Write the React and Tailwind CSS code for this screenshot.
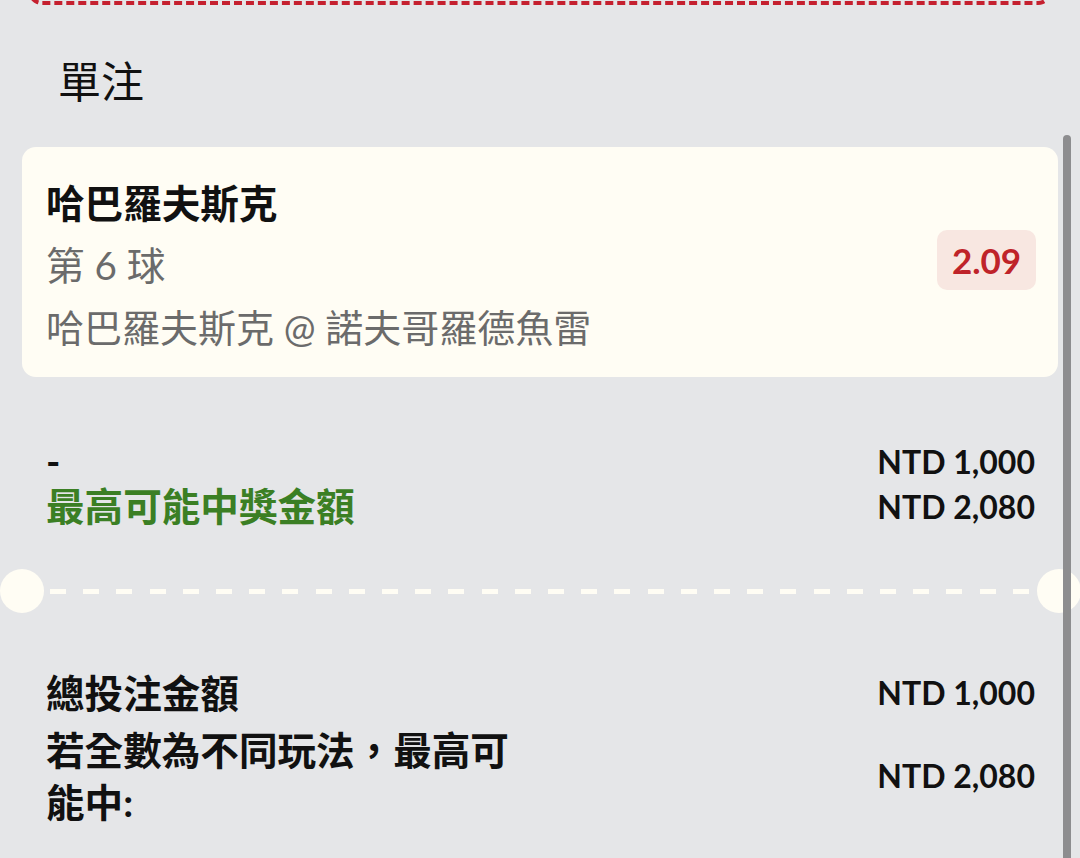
import React from 'react';

const FONT = "font-['Lato','Noto_Sans_CJK_TC',sans-serif]";

function AmountRow({ label, amount, labelClass = '', leading = 'leading-[45px]' }) {
  return (
    <div className="flex items-center justify-between">
      <div className={`w-[485px] text-[38.6px] font-bold ${leading} ${labelClass}`}>{label}</div>
      <div className={`text-[32px] font-bold text-[#111] ${leading}`}>{amount}</div>
    </div>
  );
}

export default function App() {
  return (
    <div className={`relative w-[1080px] min-h-[858px] overflow-hidden bg-[#e5e6e8] text-[#111] ${FONT}`}>
      {/* previous ticket (cut off at top) */}
      <div className="mx-[28px] -mt-[38px] h-[43px] rounded-[14px] border-[4px] border-dashed border-[#c5202f]" />

      <h1 className="ml-[58px] mt-[48px] mb-[36px] text-[43px] font-normal leading-[58px]">單注</h1>

      {/* bet card */}
      <div className="mx-[22px] flex items-center justify-between rounded-[14px] bg-[#fffdf4] pl-[24px] pr-[22px] pt-[25px] pb-[19px]">
        <div className="text-[38.6px] leading-[62px]">
          <div className="font-bold text-[#111]">哈巴羅夫斯克</div>
          <div className="text-[#6b6b6b]">第 6 球</div>
          <div className="text-[38px] text-[#6b6b6b]">哈巴羅夫斯克 @ 諾夫哥羅德魚雷</div>
        </div>
        <div className="-mt-[10px] flex h-[60px] w-[99px] items-center justify-center rounded-[10px] bg-[#f8e7e1] text-[35px] font-bold text-[#bf2329]">
          2.09
        </div>
      </div>

      <div className="pl-[46px] pr-[45px] pt-[62px] pb-[40px]">
        <AmountRow label="-" amount="NTD 1,000" />
        <AmountRow label="最高可能中獎金額" amount="NTD 2,080" labelClass="text-[#3b7f24]" />
      </div>

      {/* perforation */}
      <div className="flex h-[44px] items-center">
        <div className="h-[44px] w-[44px] shrink-0 rounded-full bg-[#fffdf4]" />
        <div className="ml-[6px] mr-[6px] h-[5px] flex-1 bg-[repeating-linear-gradient(90deg,#fffdf4_0_16px,transparent_16px_33.2px)]" />
        <div className="-mr-[1px] h-[44px] w-[44px] shrink-0 rounded-full bg-[#fffdf4]" />
      </div>

      <div className="flex flex-col gap-[5px] pl-[46px] pr-[45px] pt-[54px]">
        <AmountRow label="總投注金額" amount="NTD 1,000" leading="leading-[52px]" />
        <AmountRow label="若全數為不同玩法，最高可能中:" amount="NTD 2,080" leading="leading-[52px]" />
      </div>

      {/* scrollbar */}
      <div className="absolute right-[9px] top-[135px] bottom-0 w-[8px] rounded-t-full bg-[#8d8d8f]" />
    </div>
  );
}
